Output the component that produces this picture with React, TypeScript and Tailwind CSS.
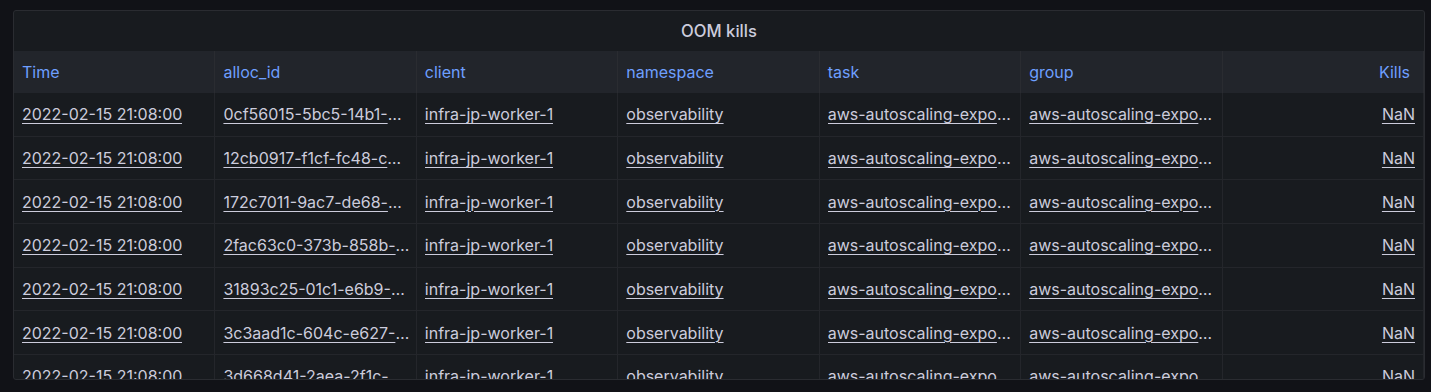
const columns = ['Time', 'alloc_id', 'client', 'namespace', 'task', 'group', 'Kills']

const allocIds = [
  '0cf56015-5bc5-14b1-8d2e-4a1f9c7b2e41',
  '12cb0917-f1cf-fc48-c3a1-77be0d5e9f02',
  '172c7011-9ac7-de68-b0f4-13c9e6a2d8b7',
  '2fac63c0-373b-858b-a91d-6e04f2b3c5d8',
  '31893c25-01c1-e6b9-5f7a-c28d41e0b936',
  '3c3aad1c-604c-e627-9b85-0fd2a7c41e63',
  '3d668d41-2aea-2f1c-7e30-b9a5c86d1f24',
]

const rows = allocIds.map(id => ({
  time: '2022-02-15 21:08:00',
  alloc: id,
  client: 'infra-jp-worker-1',
  namespace: 'observability',
  task: 'aws-autoscaling-exporter',
  group: 'aws-autoscaling-exporter',
  kills: 'NaN',
}))

export default function App() {
  return (
    <div className="w-full h-[392px] bg-[#111217] pt-[10px] pl-[13px] pr-[6px] overflow-hidden" style={{ fontFamily: 'Inter, "Noto Sans", sans-serif' }}>
      <div className="h-[370px] bg-[#181b1f] border border-[#2a2c31] rounded-[3px] overflow-hidden flex flex-col">
        {/* Panel title */}
        <div className="h-[40px] shrink-0 flex items-center justify-center text-[#ccccdc] text-[16.6px] font-medium">
          OOM kills
        </div>

        {/* Header */}
        <div className="grid grid-cols-7 h-[42px] shrink-0 bg-[#22252b]">
          {columns.map((c, i) => (
            <div key={c}
              className={`flex items-center text-[16px] text-[#6e9fff] border-r border-[#2a2c31] ${i === 6 ? 'justify-end pr-[13px]' : 'px-[8px]'}`}>
              {c}
            </div>
          ))}
        </div>

        {/* Body */}
        <div className="flex-1 overflow-hidden">
          {rows.map((r, idx) => {
            const cells = [r.time, r.alloc, r.client, r.namespace, r.task, r.group]
            return (
              <div key={idx} className="grid grid-cols-7 h-[43.7px] border-b border-[#24262b]">
                {cells.map((v, i) => (
                  <div key={i} className="flex items-center pl-[8px] pr-[6px] min-w-0 border-r border-[#24262b] text-[16px] text-[#ccccdc]">
                    <span className="truncate underline underline-offset-[3px] decoration-1">{v}</span>
                  </div>
                ))}
                <div className="flex items-center justify-end pr-[8px] border-r border-[#24262b] text-[16px] text-[#ccccdc]">
                  <span className="underline underline-offset-[3px] decoration-1">{r.kills}</span>
                </div>
              </div>
            )
          })}
        </div>
      </div>
    </div>
  )
}
